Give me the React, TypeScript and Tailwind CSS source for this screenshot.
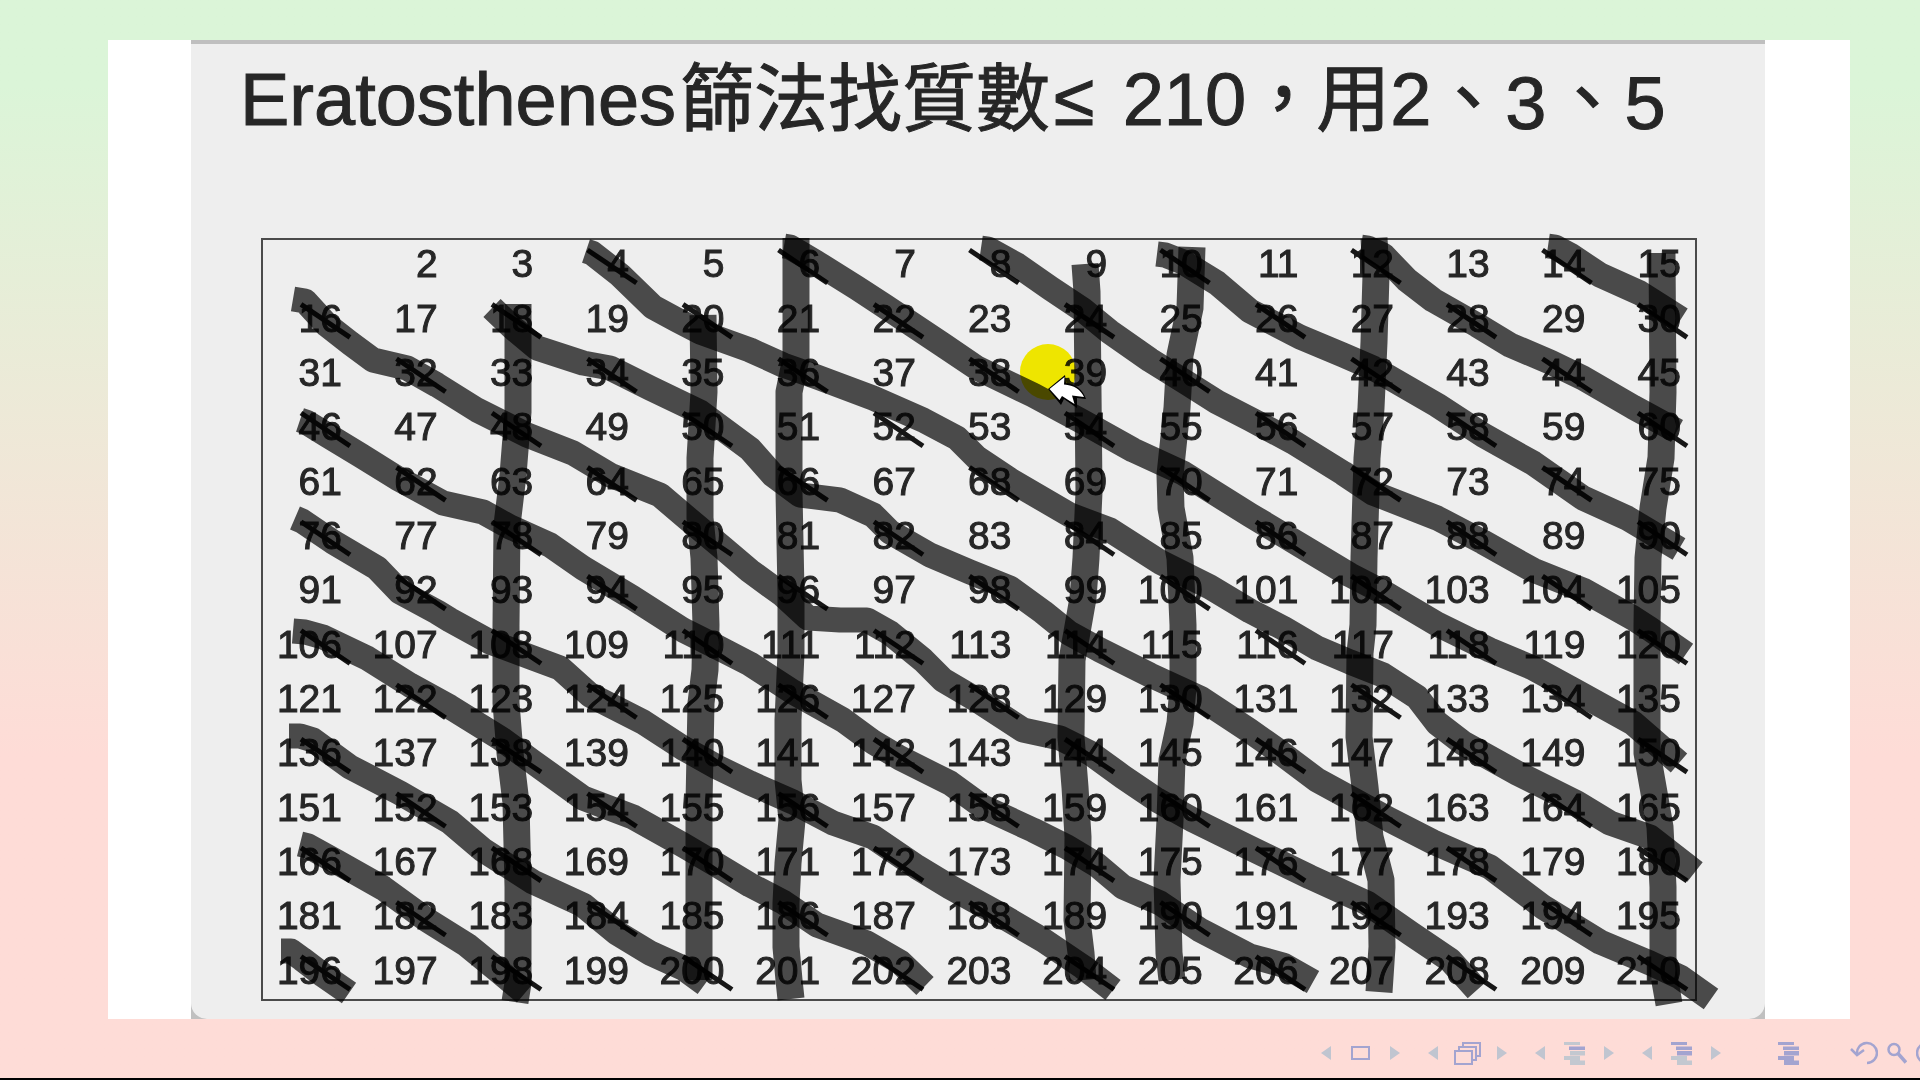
import React from "react";

const COLUMNS = 15;
const ROWS = 14;

const rows = Array.from({ length: ROWS }, (_, r) =>
  Array.from({ length: COLUMNS }, (_, c) => r * COLUMNS + c + 1)
);

const evens = rows.flat().filter((n) => n % 2 === 0 && n > 2);

// Marker strokes that run down the columns of multiples of 3 and 5.
const columnStrokes = [
  "518,304 518,412 513,475 507,525 506,625 506,703 510,753 516,803 518,887 518,983 515,1002",
  "703,315 704,392 700,458 700,518 704,558 706,625 705,670 701,703 699,803 699,887 699,980",
  "796,238 796,358 789,392 789,492 791,592 791,653 788,720 788,780 792,820 788,863 786,903 786,947 789,980 791,999",
  "1085,264 1087,292 1088,392 1089,492 1086,558 1083,598 1077,632 1072,660 1071,737 1075,787 1078,837 1077,920 1081,953 1083,980",
  "1192,247 1190,308 1180,355 1177,408 1170,475 1171,508 1180,558 1183,625 1183,687 1180,723 1172,760 1170,820 1167,880 1169,953 1172,980",
  "1374,238 1376,275 1374,342 1371,408 1367,458 1364,558 1363,625 1360,653 1359,737 1365,787 1370,837 1381,880 1382,947 1379,992",
  "1662,253 1663,392 1661,458 1653,508 1648,558 1647,625 1647,687 1647,753 1653,787 1660,827 1663,887 1663,970 1669,1004",
];

// Marker strokes that follow the multiples of 2 from one row to the next.
const diagonalStrokes = [
  "586,251 592,253 620,275 653,307 677,320 700,332 750,350 783,365 817,377 873,398 923,420 957,438 977,458 1010,480 1070,515 1110,530 1160,562 1210,587 1250,611 1283,628 1317,648 1350,662 1383,675 1417,697 1437,723 1463,743 1517,773 1577,803 1610,823 1650,837 1695,872",
  "784,246 790,247 817,263 857,288 883,305 910,323 943,345 977,368 1033,395 1083,422 1133,450 1183,473 1250,515 1300,545 1350,575 1383,592 1437,624 1490,650 1533,668 1577,692 1633,723 1679,763",
  "981,248 988,249 1017,265 1050,288 1083,310 1110,332 1150,360 1187,383 1217,402 1250,419 1293,442 1343,473 1373,493 1437,518 1483,542 1533,570 1583,590 1633,618 1650,629 1686,654",
  "1157,254 1165,255 1183,262 1217,283 1250,311 1300,337 1343,355 1373,368 1437,405 1483,435 1533,463 1583,498 1627,518 1679,549",
  "1361,247 1368,248 1383,255 1407,280 1433,300 1477,325 1510,345 1550,362 1583,378 1633,407 1677,431",
  "1548,246 1555,247 1570,255 1600,275 1640,293 1681,319",
  "492,308 513,328 537,348 583,363 610,368 650,388 700,412 750,449 773,475 800,495 840,500 873,515 890,532 930,555 970,572 1010,588 1043,612 1069,633 1100,650 1150,675 1200,698 1250,731 1277,750 1317,780 1350,798 1390,820 1433,842 1490,867 1543,907 1600,942 1650,963 1680,977 1711,999",
  "293,299 305,301 327,325 350,343 373,360 407,368 437,385 477,410 527,435 573,453 610,475 660,495 687,518 723,548 750,571 783,595 808,618 840,620 867,620 890,633 923,660 943,680 977,700 1023,730 1060,738 1090,753 1123,777 1157,800 1193,820 1250,848 1310,877 1367,903 1410,933 1450,960 1477,990",
  "300,420 306,422 327,435 360,455 397,478 443,503 483,512 510,527 550,545 583,568 633,598 683,630 717,647 750,664 793,692 843,720 873,742 900,758 950,783 983,807 1033,830 1067,847 1097,865 1123,887 1160,903 1200,930 1250,956 1283,965 1313,982",
  "295,518 302,521 333,542 377,568 400,592 437,612 450,620 490,642 533,658 560,668 590,695 643,722 683,748 717,767 750,783 793,802 833,823 873,837 917,867 950,887 997,913 1043,940 1083,967 1113,990",
  "293,631 305,632 323,637 367,658 410,685 450,707 500,738 533,762 583,798 633,817 683,845 717,865 750,885 783,902 817,925 867,943 900,962 925,986",
  "289,736 300,736 313,740 350,767 400,793 450,822 483,850 533,882 583,905 617,933 650,953 683,968 705,984",
  "300,844 308,846 337,862 383,888 427,920 467,945 500,972 525,993",
  "281,951 291,951 302,959 323,975 349,993",
];

function Annotations() {
  return (
    <svg
      className="pointer-events-none absolute inset-0 h-full w-full overflow-visible"
      viewBox="262 239 1434 761"
      preserveAspectRatio="none"
      fill="none"
      aria-hidden="true"
    >
      <g stroke="#161616" strokeWidth="5">
        {evens.map((n) => {
          const x = 345 + ((n - 1) % COLUMNS) * 95.5;
          const y = 277 + Math.floor((n - 1) / COLUMNS) * 54.35;
          return <path key={n} d={`M${x - 44} ${y - 27}L${x + 5} ${y + 6}`} />;
        })}
      </g>
      <g stroke="#000" strokeOpacity="0.69" strokeLinejoin="round">
        {columnStrokes.map((points) => (
          <polyline key={points} points={points} strokeWidth="27" />
        ))}
        {diagonalStrokes.map((points) => (
          <polyline key={points} points={points} strokeWidth="25" />
        ))}
      </g>
    </svg>
  );
}

function Pointer() {
  return (
    <>
      <span className="absolute top-[105px] left-[758px] size-14 rounded-full bg-[#fff600] mix-blend-multiply" />
      <svg
        className="absolute top-[134px] left-[784px]"
        width="40"
        height="36"
        viewBox="1046 373 40 36"
        aria-hidden="true"
      >
        <path
          d="M1048 389L1065 375L1066 383C1076 384 1083 390 1086 399L1077 398L1077 408L1064 399L1061 405Z"
          fill="#000"
        />
        <path
          d="M1049.500 389L1064.500 377L1064 384.500C1074 385 1081 390 1084 397L1072 395.500L1074.500 404L1062 396L1059.500 400Z"
          fill="#fff"
        />
      </svg>
    </>
  );
}

function Triangle({ label, flip }: { label: string; flip?: boolean }) {
  return (
    <button type="button" aria-label={label} className="h-6 w-[10px]">
      <svg width="10" height="24" viewBox="0 0 10 24" className={flip ? "rotate-180" : ""}>
        <path d="M10 5V19L0 12Z" fill="#c0c5d0" />
      </svg>
    </button>
  );
}

function NavGroup({ label, children }: { label: string; children: React.ReactNode }) {
  return (
    <div className="flex w-[79px] items-center justify-between">
      <Triangle label={`Previous ${label}`} />
      <button type="button" aria-label={label} className="flex h-6 w-7 items-center justify-center">
        {children}
      </button>
      <Triangle label={`Next ${label}`} flip />
    </div>
  );
}

function Lines({ colors }: { colors: [string, string, string, string] }) {
  return (
    <svg width="22" height="24" viewBox="0 0 22 24">
      <path d="M0 1H16V4H0Z" fill={colors[0]} />
      <path d="M5 5.500H21V9H5Z" fill={colors[1]} />
      <path d="M6 10H21V14.500H6Z" fill={colors[2]} />
      <path d="M0 15H16V19.500H21V24H6V19H0Z" fill={colors[3]} />
    </svg>
  );
}

const DIM = "#c3c8d0";
const INK = "#a3a4d0";

function NavigationBar() {
  return (
    <nav aria-label="Slides" className="-mr-6 flex shrink-0 items-center pt-[22px]">
      <div className="flex gap-7">
        <NavGroup label="slide">
          <svg width="19" height="14" viewBox="0 0 19 14">
            <rect x="1" y="1" width="17" height="12" fill="none" stroke={INK} strokeWidth="2" />
          </svg>
        </NavGroup>
        <NavGroup label="frame">
          <svg width="28" height="24" viewBox="0 0 28 24" fill="none" stroke={INK} strokeWidth="2">
            <path d="M9 5V2H26V15H23" />
            <path d="M5 10V6H22V19H18" />
            <path d="M1 10H18V23H1Z" />
          </svg>
        </NavGroup>
        <NavGroup label="subsection">
          <Lines colors={[DIM, INK, DIM, DIM]} />
        </NavGroup>
        <NavGroup label="section">
          <Lines colors={[INK, INK, INK, DIM]} />
        </NavGroup>
      </div>
      <button type="button" aria-label="Document" className="ml-[57px]">
        <Lines colors={[INK, INK, INK, INK]} />
      </button>
      <div className="ml-[50px] flex items-center gap-[9px]">
        <button type="button" aria-label="Back">
          <svg width="28" height="24" viewBox="0 0 28 24" fill="none" stroke={INK} strokeWidth="2.500">
            <path d="M7 13A10 10 0 1 1 17 22" />
            <path d="M1 8L7 14L14 9" />
          </svg>
        </button>
        <button type="button" aria-label="Search">
          <svg width="20" height="24" viewBox="0 0 20 24" fill="none" stroke={INK}>
            <circle cx="7" cy="8.500" r="5.500" strokeWidth="2.500" />
            <path d="M11 12.500L19 21.500" strokeWidth="3.500" />
          </svg>
        </button>
        <button type="button" aria-label="Forward">
          <svg width="28" height="24" viewBox="0 0 28 24" fill="none" stroke={INK} strokeWidth="2.500">
            <path d="M11 22A10 10 0 1 1 21 13" />
            <path d="M27 8L21 14L14 9" />
          </svg>
        </button>
      </div>
    </nav>
  );
}

export default function App() {
  return (
    <div className="flex min-h-screen flex-col overflow-hidden border-b-2 border-black bg-linear-to-b from-[#dbf5d8] from-8% to-[#fedcd7] to-70% pt-10 font-['Liberation_Sans','Noto_Sans_CJK_TC',sans-serif] text-[#262626] [-webkit-text-stroke:1px_#262626]">
      <main className="mr-[70px] ml-[108px] bg-white pr-[85px] pl-[83px]">
        <div className="bg-[#c0c0c0]">
          <section className="rounded-b-2xl border-t-4 border-[#bfbfbf] bg-[#eeeeee] pr-[69px] pb-[19px] pl-[71px]">
            <h1 className="-ml-[22px] flex h-[195px] items-start pt-3 text-[74px] leading-[88px] whitespace-nowrap">
              <span>Eratosthenes</span>
              <span className="ml-1">篩法找質數</span>
              <span className="ml-1">≤</span>
              <span className="ml-7">210</span>
              <span>，</span>
              <span className="-ml-1">用</span>
              <span>2</span>
              <span>、</span>
              <span className="pt-1">3</span>
              <span className="ml-1">、</span>
              <span className="pt-1">5</span>
            </h1>
            <div className="relative outline-2 -outline-offset-1 outline-[#4a4a4a]">
              <table className="h-[761px] w-full table-fixed border-collapse">
                <tbody>
                  {rows.map((row) => (
                    <tr key={row[0]}>
                      {row.map((n, c) => (
                        <td
                          key={n}
                          className={
                            c === 0
                              ? "w-[80px] p-0 pb-1 text-right text-[39px] leading-[44px]"
                              : "p-0 pb-1 text-right text-[39px] leading-[44px]"
                          }
                        >
                          {n === 1 ? "" : n}
                        </td>
                      ))}
                      <td className="w-[15px] p-0" />
                    </tr>
                  ))}
                </tbody>
              </table>
              <Annotations />
              <Pointer />
            </div>
          </section>
        </div>
      </main>
      <footer className="flex justify-end">
        <NavigationBar />
      </footer>
    </div>
  );
}
